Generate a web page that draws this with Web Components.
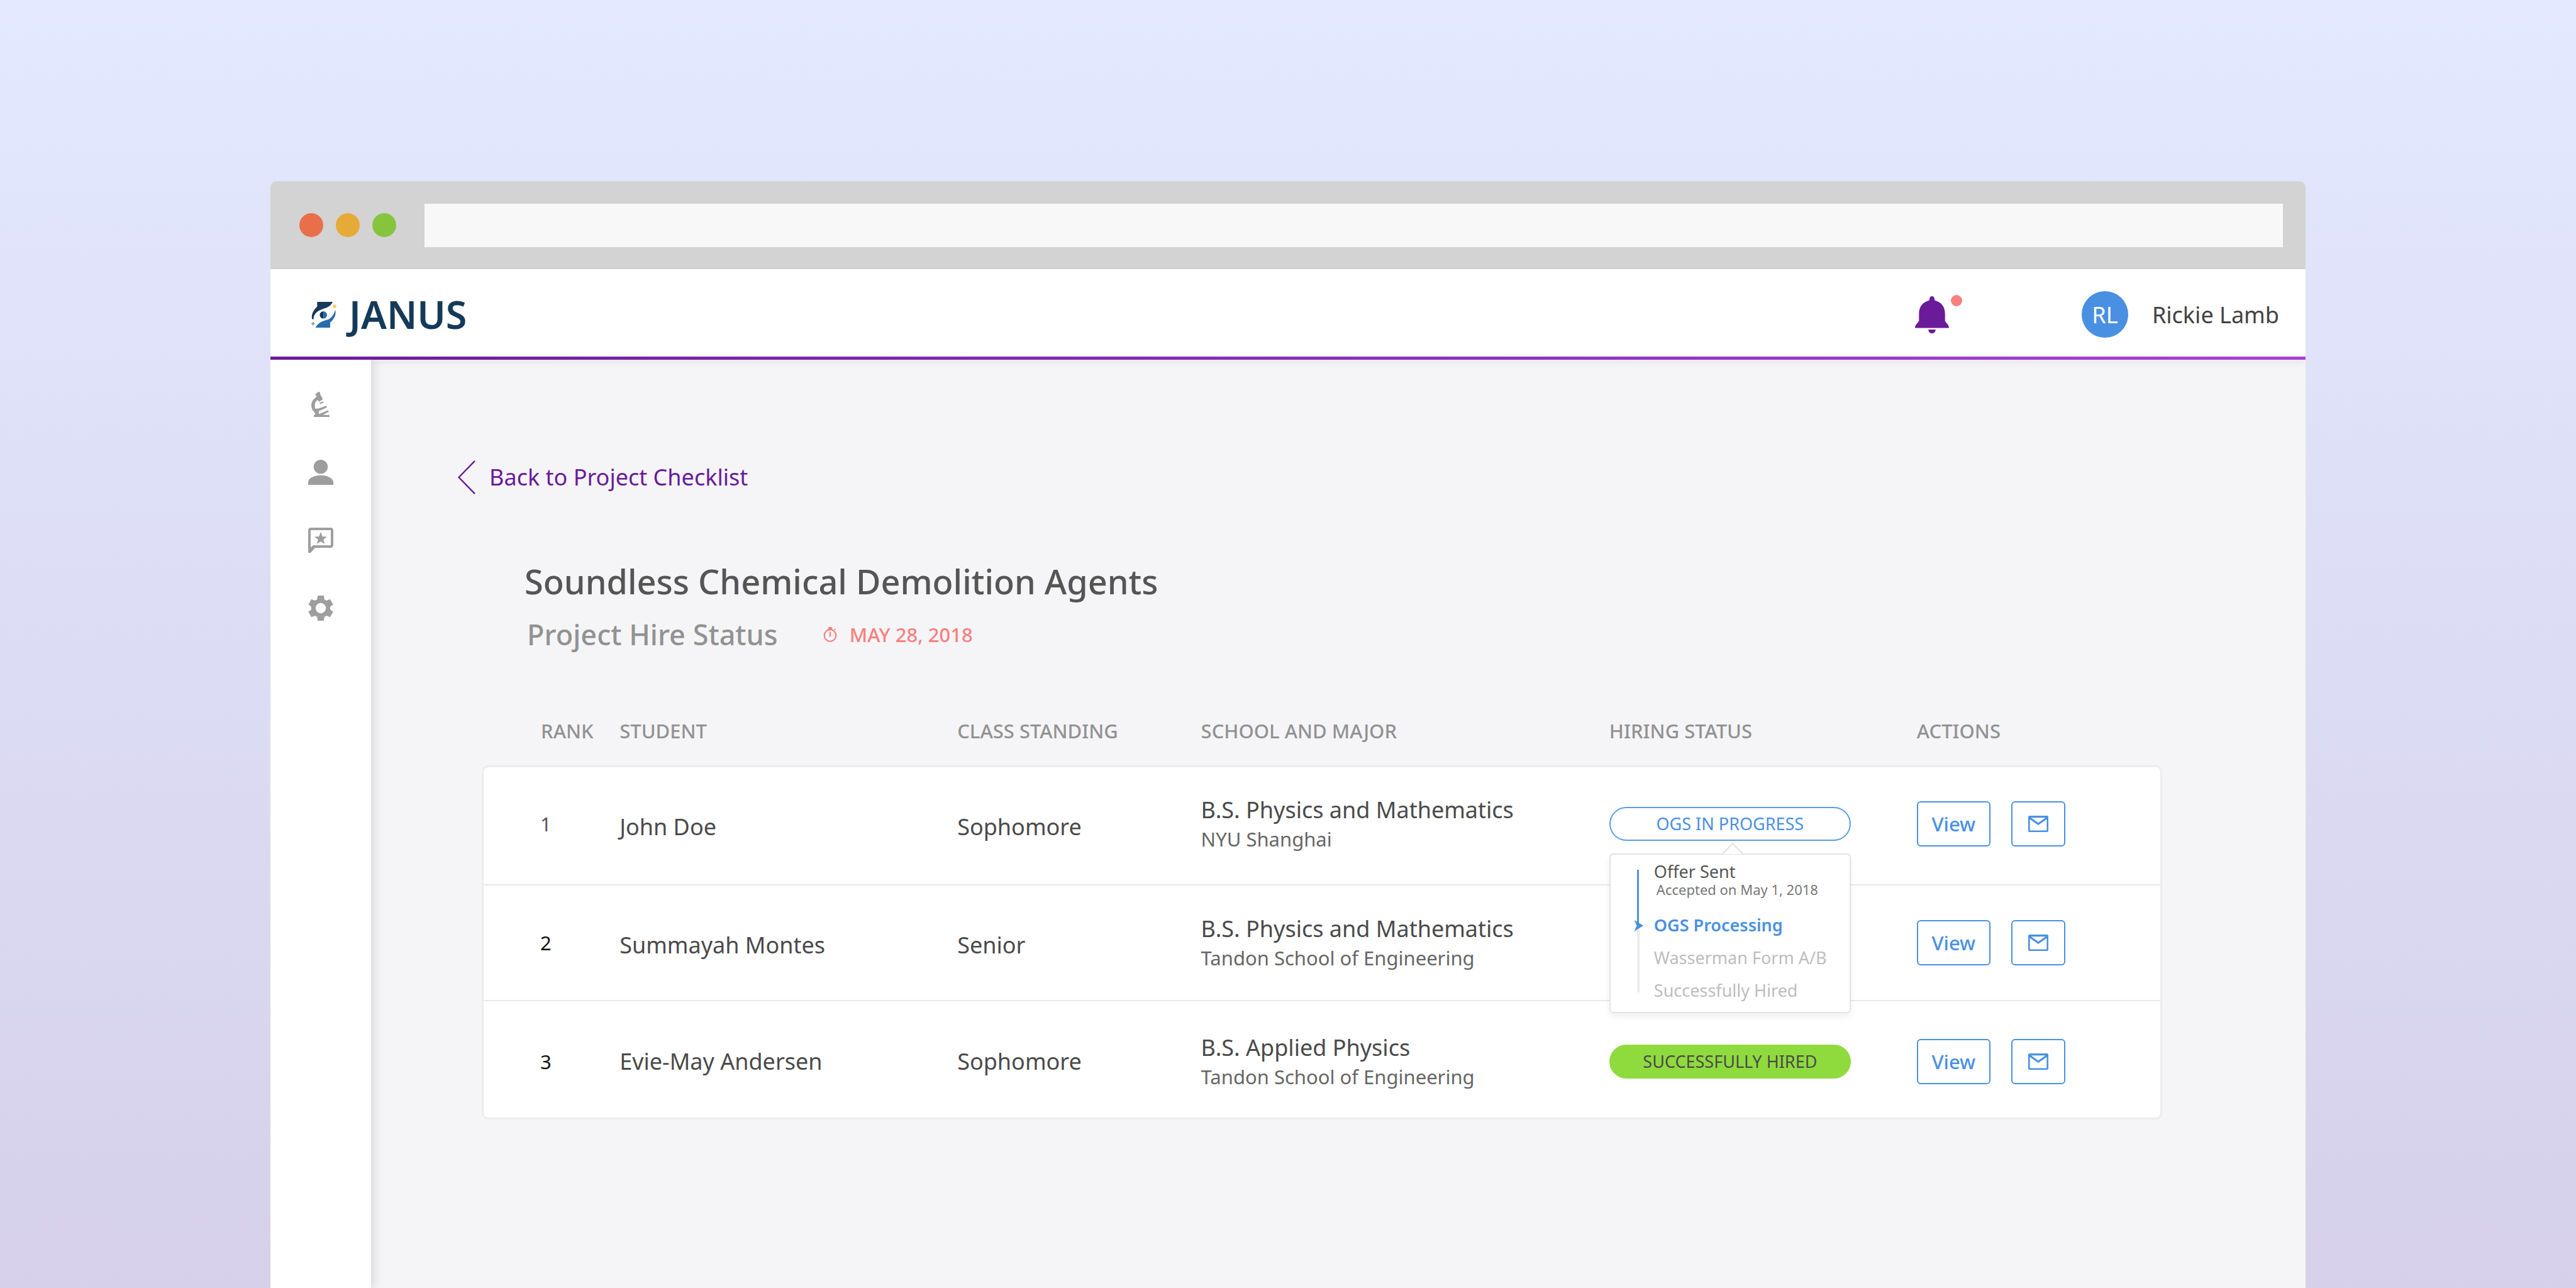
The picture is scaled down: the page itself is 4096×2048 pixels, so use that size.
<!DOCTYPE html>
<html lang="en">
<head>
<meta charset="utf-8">
<title>Janus – Project Hire Status</title>
<style>
  html, body { height: 100%; }
  body {
    margin: 0;
    display: flex;
    flex-direction: column;
    font-family: "Noto Sans", sans-serif;
    font-size: 36px;
    color: #4a4a4a;
    background: linear-gradient(#e3e9ff, #d6d0ea);
    overflow: hidden;
  }
</style>
</head>
<body>
<browser-frame>
  <app-header slot="header" user="Rickie Lamb" initials="RL"></app-header>
  <side-nav slot="nav"></side-nav>
  <back-link href="#checklist">Back to Project Checklist</back-link>
  <page-heading date="MAY 28, 2018">
    <span slot="title">Soundless Chemical Demolition Agents</span>
    <span slot="subtitle">Project Hire Status</span>
  </page-heading>
  <hire-table></hire-table>
</browser-frame>

<script>
const ICONS = {
  logo: ['0 0 40 41', `
    <path fill="#153a59" d="M9.300 0H34C32 4 30 6 27.500 7.500C22 11 13 12 8 17C5 20 3.600 23 3.600 28L1 27C0 20 3 13.500 9.300 7.500Z"/>
    <path fill="#276daa" d="M6.500 41H30V33C37 26.500 40 20 38 12.500C36.500 19 33 24.500 28 27.500C22 30 13 30 6.500 41Z"/>
    <path fill="#153a59" d="M19.200 15A5.800 5.800 0 0 0 19.200 26.600Z"/>
    <path fill="#276daa" d="M19.200 15A5.800 5.800 0 0 1 19.200 26.600Z"/>
    <rect x="34.500" y="4.500" width="5" height="5" rx="1.500" fill="#fdc84a"/>
    <path stroke="#8c8c8c" stroke-width="1.600" d="M2.800 32V37.500M0 34.800H5.600"/>`],
  bell: ['0 0 54 59', `<path d="M27 0C29.500 0 31 2 31.200 6.500C41 9 47.700 16 47.700 28V39C48.500 42 54 45 54 50.500H0C0 45 5.500 42 6.300 39V28C6.300 16 13 9 22.800 6.500C23 2 24.500 0 27 0ZM21.200 53H32.800C32.500 57 30 59 27 59S21.500 57 21.200 53Z"/>`],
  lab: ['-5 0 40 40', `<path d="M6 3.200L8.800 2.400L9.200 1L12.500 0L14 1.300L14.200 4.200L18.400 11.600L16.800 13.200L15 13.600L13.600 15.800L11.200 15L10.600 12.900C7.500 14.200 5.600 17 5.600 21.300C5.600 24 5.900 25.600 6.600 26.900L11.500 26.600L23.800 22L24.600 25L11.800 30.800L12 35.500L26.800 29.200L27.800 31.800L18.500 36.400L29 37V40H4V37L6.500 36C5.500 34.500 5.300 33.500 5 32.200C2 30 0 26 0 21.500C0 16 3 12 7 9L8.500 7.500Z"/><path d="M13.500 17.200L19.500 15.200L19.800 17L14 19.400Z"/>`],
  person: ['4 4 16 16', `<path d="M12 12.900c2.500 0 4.500-2 4.500-4.450S14.500 4 12 4S7.500 6 7.500 8.450S9.500 12.900 12 12.900zM12 13.900c-3.700 0-8 1.700-8 4.300V20h16v-1.800c0-2.600-4.300-4.300-8-4.300z"/>`],
  review: ['2 2 20 20', `<path fill-rule="evenodd" d="M20 2H4c-1.100 0-2 .9-2 2v18h2l3.500-4H20c1.100 0 2-.9 2-2V4c0-1.100-.9-2-2-2zm0 14H6L4 17.800V4h16z"/><path d="M12 5.400l1.350 3.600 3.650.2-2.850 2.300.95 3.500L12 13l-3.100 2 .95-3.500L7 9.200l3.650-.2z"/>`],
  gear: ['2 2 20 20', `<path fill-rule="evenodd" d="M19.430 12.980c.04-.32.07-.64.07-.98s-.03-.66-.07-.98l2.110-1.650c.19-.15.24-.42.12-.64l-2-3.460c-.12-.22-.39-.3-.61-.22l-2.490 1c-.52-.4-1.080-.73-1.690-.98l-.38-2.650C14.460 2.180 14.250 2 14 2h-4c-.25 0-.46.18-.49.42l-.38 2.650c-.61.25-1.170.59-1.690.98l-2.490-1c-.23-.09-.49 0-.61.22l-2 3.460c-.13.22-.07.49.12.64l2.110 1.650c-.04.32-.07.65-.07.98s.03.66.07.98l-2.110 1.650c-.19.15-.24.42-.12.64l2 3.460c.12.22.39.3.61.22l2.490-1c.52.4 1.080.73 1.690.98l.38 2.650c.03.24.24.42.49.42h4c.25 0 .46-.18.49-.42l.38-2.650c.61-.25 1.170-.59 1.690-.98l2.490 1c.23.09.49 0 .61-.22l2-3.460c.12-.22.07-.49-.12-.64zM12 16.100a4.100 4.100 0 1 1 0-8.200a4.100 4.100 0 0 1 0 8.200z"/>`],
  chevron: ['0 0 28 54', `<path fill="none" stroke="currentColor" stroke-width="2.400" d="M27 .8L1.600 27L27 53.200"/>`],
  timer: ['0 0 22 24', `<g fill="none" stroke="currentColor" stroke-width="2.200"><circle cx="11" cy="13.500" r="9.300"/><path d="M11 7.500V15.500"/><path d="M17.800 4.800L19.500 3.200"/></g><path d="M7.500 1.800L9 0H13L14.500 1.800V4.500H7.500Z"/>`],
  mail: ['0 0 32 26', `<path fill-rule="evenodd" d="M2 0H30A2 2 0 0 1 32 2V24A2 2 0 0 1 30 26H2A2 2 0 0 1 0 24V2A2 2 0 0 1 2 0ZM2.600 5.800V23.400H29.400V5.800L16 15ZM4.500 3.200L16 11.300L27.500 3.200Z"/>`],
  rail: ['0 0 16 195', `<rect x="5" y="90" width="4.500" height="105" fill="#eeeeee"/><rect x="5" width="3" height="88" fill="#4a90e2"/><path fill="#4a90e2" d="M.5 80L15 88.700L.5 98L4.500 89Z"/>`]
};
const icon = (name, w, h) =>
  `<svg aria-hidden="true" width="${w}" height="${h}" viewBox="${ICONS[name][0]}" fill="currentColor">${ICONS[name][1]}</svg>`;

class BaseElement extends HTMLElement {
  constructor() { super(); this.attachShadow({ mode: 'open' }); }
  connectedCallback() {
    this.shadowRoot.innerHTML =
      `<style>*,*::before,*::after{box-sizing:border-box} svg{display:block;flex:none} :host([hidden]){display:none} ${this.css()}</style>${this.html()}`;
  }
  css() { return ''; }
  html() { return '<slot></slot>'; }
}

customElements.define('browser-frame', class extends BaseElement {
  css() { return `
    :host { flex: 1; display: flex; flex-direction: column; width: 79%; margin: 288px auto 0; border-radius: 10px 10px 0 0; overflow: hidden; }
    .bar { display: flex; align-items: center; gap: 20px; height: 140px; padding: 0 36px 0 46px; background: #d3d3d3; }
    .dot { width: 38px; height: 38px; border-radius: 50%; background: #e96f4b; }
    .dot.min { background: #e6aa37; }
    .dot.max { background: #86c43d; }
    input { flex: 1; min-width: 0; height: 69px; margin-left: 25px; padding: 0 20px; border: 0; border-radius: 0; background: #f8f8f8; font: inherit; }
    .body { flex: 1; display: flex; background: #f5f5f7; }
    main { flex: 1; min-width: 0; padding: 160px 228px 0 138px; }`; }
  html() { return `
    <div class="bar"><span class="dot"></span><span class="dot min"></span><span class="dot max"></span><input type="text" aria-label="Address"></div>
    <slot name="header"></slot>
    <div class="body"><slot name="nav"></slot><main><slot></slot></main></div>`; }
});

customElements.define('app-header', class extends BaseElement {
  css() { return `
    :host { display: flex; align-items: center; height: 144px; padding: 0 42px 0 65px; position: relative; z-index: 1; background: linear-gradient(90deg, #6b1b9a, #ac40d4) bottom / 100% 5px no-repeat #fff; box-shadow: 0 4px 12px rgba(0,0,0,.06); }
    .brand { display: flex; align-items: center; gap: 20px; margin-right: auto; color: #153a59; font-size: 61px; line-height: 82px; font-weight: 600; text-decoration: none; }
    .alerts { position: relative; padding: 0; border: 0; background: none; color: #6a1b9a; }
    .alerts::after { content: ""; position: absolute; left: 57px; top: -2px; width: 18px; height: 18px; border-radius: 50%; background: #f88080; }
    .avatar { display: grid; place-items: center; width: 74px; height: 74px; margin: 0 38px 0 211px; border-radius: 50%; background: #4a90e2; color: #fff; }
    .name { color: #424242; }`; }
  html() { return `
    <a class="brand" href="#home">${icon('logo', 40, 41)}<span>JANUS</span></a>
    <button class="alerts" aria-label="Notifications">${icon('bell', 54, 59)}</button>
    <span class="avatar">${this.getAttribute('initials')}</span>
    <span class="name">${this.getAttribute('user')}</span>`; }
});

customElements.define('side-nav', class extends BaseElement {
  css() { return `
    :host { display: block; width: 160px; position: relative; z-index: 2; background: #fff; box-shadow: 6px 0 14px rgba(0,0,0,.1); clip-path: inset(0 -40px 0 0); }
    nav { display: flex; flex-direction: column; align-items: center; gap: 68px; padding-top: 51px; }
    a { color: #9e9e9e; }`; }
  html() {
    const items = [['lab', 'Projects'], ['person', 'Profile'], ['review', 'Reviews'], ['gear', 'Settings']];
    return `<nav>${items.map(([i, l]) => `<a href="#${i}" aria-label="${l}">${icon(i, 40, 40)}</a>`).join('')}</nav>`;
  }
});

customElements.define('back-link', class extends BaseElement {
  css() { return `
    :host { display: flex; }
    a { display: flex; align-items: center; gap: 22px; color: #6a1b9a; line-height: 54px; text-decoration: none; }`; }
  html() { return `<a href="${this.getAttribute('href')}">${icon('chevron', 28, 54)}<slot></slot></a>`; }
});

customElements.define('page-heading', class extends BaseElement {
  css() { return `
    :host { display: block; margin: 102px 0 0 106px; }
    h1 { margin: 0; font-size: 54px; line-height: 72px; font-weight: 500; color: #555; }
    .row { display: flex; align-items: center; gap: 72px; margin-top: 19px; padding-left: 4px; }
    h2 { margin: 0; font-size: 45px; line-height: 60px; font-weight: 500; color: #929292; }
    time { display: flex; align-items: center; gap: 20px; font-size: 31px; line-height: 42px; font-weight: 500; color: #f88080; }`; }
  html() { return `
    <h1><slot name="title"></slot></h1>
    <div class="row"><h2><slot name="subtitle"></slot></h2><time>${icon('timer', 22, 24)}<span>${this.getAttribute('date')}</span></time></div>`; }
});

customElements.define('status-pill', class extends BaseElement {
  css() { return `
    :host { display: block; width: 384px; height: 54px; border: 2px solid #5c9be6; border-radius: 27px; font-size: 27px; line-height: 50px; text-align: center; color: #4a90e2; box-sizing: border-box; }
    :host([done]) { border-color: #8fdb3e; background: #8fdb3e; color: #4a4a4a; }`; }
});

customElements.define('status-steps', class extends BaseElement {
  css() { return `
    :host { position: absolute; z-index: 3; left: 0; top: calc(100% + 20px); width: 384px; box-sizing: border-box; display: flex; align-items: flex-start; gap: 16px; padding: 12px 10px 19px 37px; border: 2px solid #e3e3df; border-radius: 6px; background: #fff; box-shadow: 0 6px 12px rgba(0,0,0,.06); }
    :host::before { content: ""; position: absolute; left: 182px; top: -14px; width: 24px; height: 24px; border: solid #e3e3df; border-width: 2px 0 0 2px; background: linear-gradient(135deg, #fff 50%, transparent 50%); transform: rotate(45deg); box-sizing: border-box; }
    svg { margin-top: 12px; }
    ol { display: flex; flex-direction: column; gap: 22px; margin: 0; padding: 0; list-style: none; font-size: 27px; line-height: 30px; color: #bdbdbd; white-space: nowrap; }
    .done { padding-bottom: 6px; color: #555; }
    small { display: block; padding-left: 4px; font-size: 22px; line-height: 27px; color: #777; }
    .now { font-weight: 600; color: #4a90e2; }`; }
  html() { return `${icon('rail', 16, 195)}
    <ol>
      <li class="done">Offer Sent<small>Accepted on May 1, 2018</small></li>
      <li class="now" aria-current="step">OGS Processing</li>
      <li>Wasserman Form A/B</li>
      <li>Successfully Hired</li>
    </ol>`; }
});

customElements.define('outline-button', class extends BaseElement {
  css() { return `
    :host { display: block; }
    button { display: grid; place-items: center; width: var(--button-width, 117px); height: 72px; padding: 0; border: 2px solid #4a90e2; border-radius: 6px; background: #fff; color: #4a90e2; font: 500 31px/42px "Noto Sans", sans-serif; }`; }
  html() {
    const label = this.getAttribute('label');
    return label ? `<button aria-label="${label}">${icon('mail', 32, 26)}</button>` : '<button><slot></slot></button>';
  }
});

const STUDENTS = [
  { rank: 1, name: 'John Doe', standing: 'Sophomore', major: 'B.S. Physics and Mathematics', school: 'NYU Shanghai',
    status: '<status-pill>OGS IN PROGRESS</status-pill><status-steps></status-steps>' },
  { rank: 2, name: 'Summayah Montes', standing: 'Senior', major: 'B.S. Physics and Mathematics', school: 'Tandon School of Engineering', status: '' },
  { rank: 3, name: 'Evie-May Andersen', standing: 'Sophomore', major: 'B.S. Applied Physics', school: 'Tandon School of Engineering',
    status: '<status-pill done>SUCCESSFULLY HIRED</status-pill>' }
];

customElements.define('hire-table', class extends BaseElement {
  css() { return `
    :host { display: block; margin: 102px 0 0 38px; }
    table { width: 100%; table-layout: fixed; border-collapse: separate; border-spacing: 0; color: #4a4a4a; }
    .c-rank { width: 8.2%; } .c-student { width: 20.1%; } .c-class { width: 14.5%; } .c-school { width: 24.3%; } .c-status { width: 18.3%; }
    th { padding: 0 0 34px; font-size: 31px; line-height: 42px; font-weight: 500; text-align: left; color: #929292; white-space: nowrap; }
    th:first-child { padding-left: 94px; }
    td { height: 187px; padding: 0; vertical-align: middle; background: #fff; border-bottom: 2px solid #e8e8e8; line-height: 48px; }
    td:first-child { padding-left: 90px; border-left: 3px solid #ececec; font-size: 31px; color: #555; }
    td:last-child { border-right: 3px solid #ececec; }
    tr.first td { height: 191px; border-top: 3px solid #ebebeb; padding-bottom: 6px; }
    tr.mid td { height: 184px; }
    tr.mid td:first-child, tr.last td:first-child { color: #111; }
    tr.last td { height: 188px; border-bottom: 3px solid #ebebeb; padding-top: 6px; }
    tr.first td.plain { padding: 4px 0 0; }
    tr.mid td.plain { padding-top: 8px; }
    tr.first td:first-child { border-top-left-radius: 10px; }
    tr.first td:last-child { border-top-right-radius: 10px; }
    tr.last td:first-child { border-bottom-left-radius: 10px; }
    tr.last td:last-child { border-bottom-right-radius: 10px; }
    .school { display: block; font-size: 31px; line-height: 44px; color: #666; }
    .status { position: relative; }
    .actions { display: flex; gap: 33px; }
    .mail { --button-width: 86px; }`; }
  html() {
    const rowClass = ['first', 'mid', 'last'];
    return `<table>
      <colgroup><col class="c-rank"><col class="c-student"><col class="c-class"><col class="c-school"><col class="c-status"><col></colgroup>
      <thead><tr>${['RANK', 'STUDENT', 'CLASS STANDING', 'SCHOOL AND MAJOR', 'HIRING STATUS', 'ACTIONS'].map(h => `<th scope="col">${h}</th>`).join('')}</tr></thead>
      <tbody>${STUDENTS.map((s, i) => `<tr class="${rowClass[i]}">
        <td>${s.rank}</td>
        <td class="plain">${s.name}</td>
        <td class="plain">${s.standing}</td>
        <td>${s.major}<span class="school">${s.school}</span></td>
        <td><div class="status">${s.status}</div></td>
        <td><div class="actions"><outline-button>View</outline-button><outline-button class="mail" label="Email ${s.name}"></outline-button></div></td>
      </tr>`).join('')}</tbody></table>`;
  }
});
</script>
</body>
</html>
